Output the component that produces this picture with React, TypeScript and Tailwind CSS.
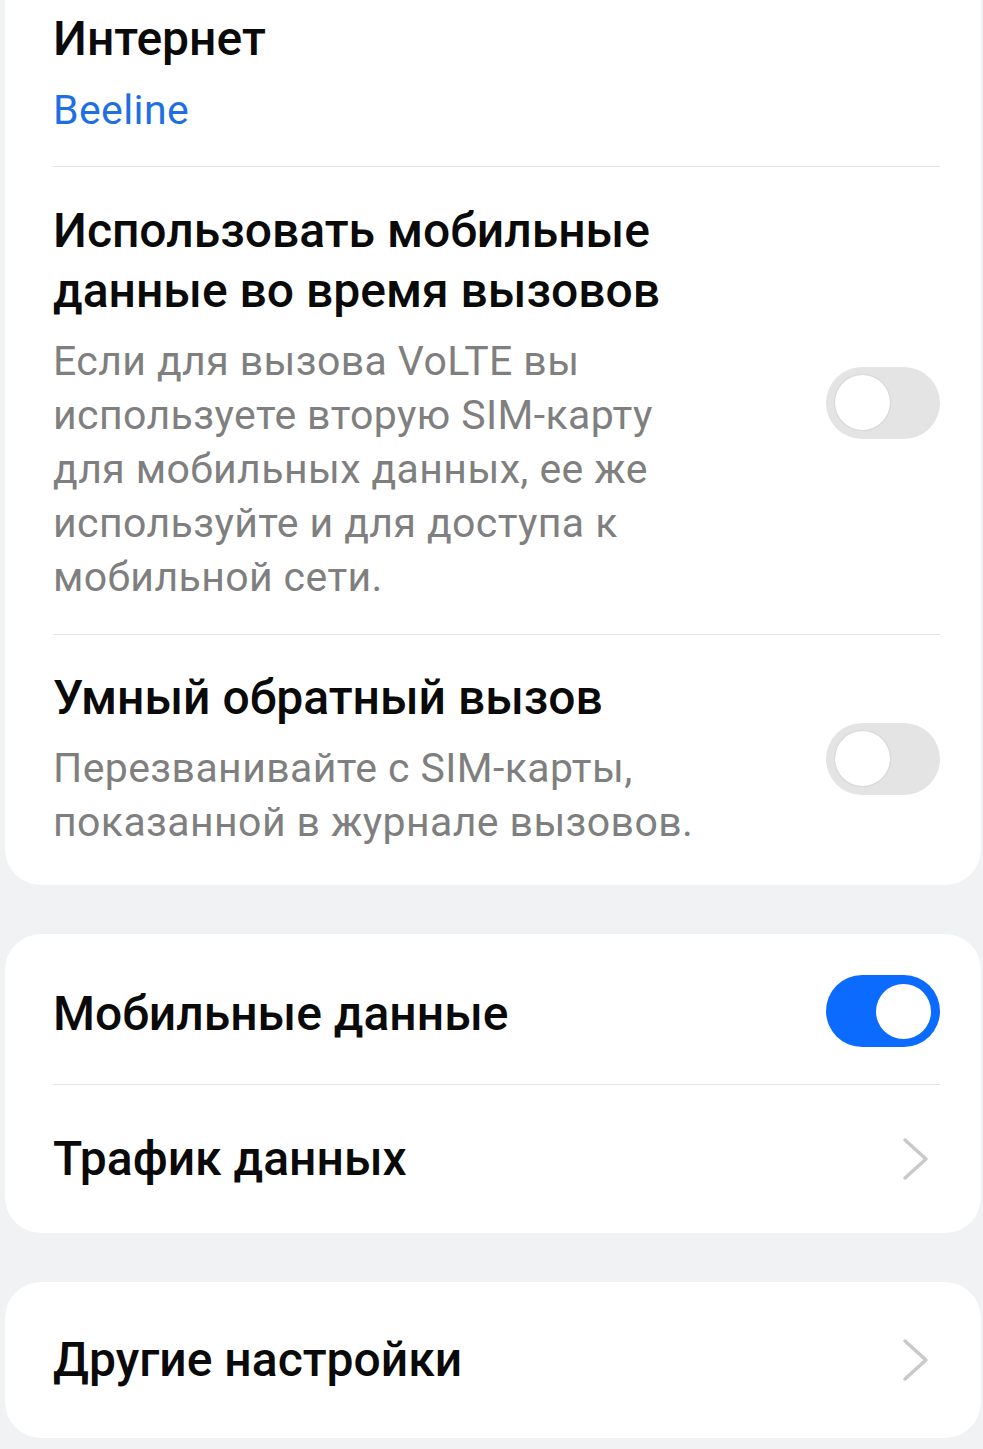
import React from 'react';

const font = { fontFamily: 'Roboto, "Noto Sans", "Liberation Sans", sans-serif' };

const Toggle = ({ on }: { on: boolean }) => (
  <div
    className={`flex h-[72px] w-[114px] shrink-0 items-center rounded-full px-[9px] ${
      on ? 'justify-end bg-[#0b6bff]' : 'justify-start bg-[#e4e4e4]'
    }`}
  >
    <div
      className={`h-[55px] w-[55px] rounded-full bg-white ${
        on ? '' : 'shadow-[0_0_2px_rgba(0,0,0,0.18)]'
      }`}
    />
  </div>
);

const Chevron = () => (
  <svg width="28" height="44" viewBox="0 0 28 44" className="mr-[11px] shrink-0">
    <path d="M4 3 L25 22 L4 41" fill="none" stroke="#c9c9c9" strokeWidth="3.5" strokeLinecap="round" strokeLinejoin="round" />
  </svg>
);

const Divider = () => <div className="h-px bg-[#e3e3e3]" />;

export default function App() {
  return (
    <div className="min-h-[1449px] bg-[#f1f2f4] pb-[11px] pl-[5px] pr-[2px]" style={font}>
      {/* верхняя карточка: интернет и вызовы */}
      <div className="rounded-b-[36px] bg-white pl-[48px] pr-[41px]">
        <div className="pt-[9px] pb-[29px]">
          <p className="text-[48px] font-medium leading-[60px] text-[#0a0a0a]">Интернет</p>
          <p className="mt-[14px] text-[41px] leading-[54px] tracking-[0.4px] text-[#1d6fe3]">Beeline</p>
        </div>
        <Divider />

        <div className="flex items-center justify-between pt-[34px] pb-[30px]">
          <div>
            <p className="text-[48px] font-medium leading-[60px] text-[#0a0a0a]">
              Использовать мобильные
              <br />
              данные во время вызовов
            </p>
            <p className="mt-[13px] text-[41px] leading-[54px] tracking-[0.4px] text-[#7f7f7f]">
              Если для вызова VoLTE вы
              <br />
              используете вторую SIM-карту
              <br />
              для мобильных данных, ее же
              <br />
              используйте и для доступа к
              <br />
              мобильной сети.
            </p>
          </div>
          <Toggle on={false} />
        </div>
        <Divider />

        <div className="flex items-center justify-between pt-[33px] pb-[36px]">
          <div>
            <p className="text-[48px] font-medium leading-[60px] text-[#0a0a0a]">Умный обратный вызов</p>
            <p className="mt-[13px] text-[41px] leading-[54px] tracking-[0.4px] text-[#7f7f7f]">
              Перезванивайте с SIM-карты,
              <br />
              показанной в журнале вызовов.
            </p>
          </div>
          <Toggle on={false} />
        </div>
      </div>

      {/* мобильные данные */}
      <div className="mt-[49px] rounded-[36px] bg-white pl-[48px] pr-[41px]">
        <div className="flex h-[150px] items-center justify-between pt-[4px]">
          <p className="pt-[6px] text-[48px] font-medium leading-[60px] text-[#0a0a0a]">Мобильные данные</p>
          <Toggle on />
        </div>
        <Divider />
        <div className="flex h-[148px] items-center justify-between">
          <p className="text-[48px] font-medium leading-[60px] text-[#0a0a0a]">Трафик данных</p>
          <Chevron />
        </div>
      </div>

      {/* прочее */}
      <div className="mt-[49px] rounded-[36px] bg-white pl-[48px] pr-[41px]">
        <div className="flex h-[156px] items-center justify-between">
          <p className="text-[48px] font-medium leading-[60px] text-[#0a0a0a]">Другие настройки</p>
          <Chevron />
        </div>
      </div>
    </div>
  );
}
